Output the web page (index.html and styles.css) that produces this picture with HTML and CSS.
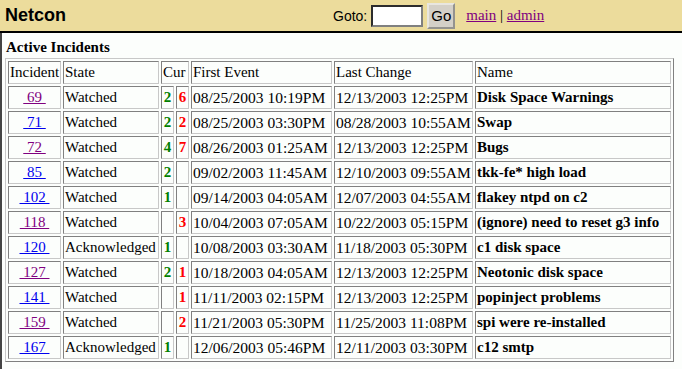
FILE: index.html
```html
<!DOCTYPE html>
<html lang="en">
<head>
  <meta charset="UTF-8">
  <title>Netcon</title>
  <link rel="stylesheet" href="styles.css">
</head>
<body>
  <header class="topbar">
    <div class="brand">Netcon</div>
    <form class="goto">
      <label for="goto">Goto:</label>
      <input type="text" id="goto">
      <button type="submit">Go</button>
      <span class="nav"><a href="#" class="visited">main</a> | <a href="#" class="visited">admin</a></span>
    </form>
  </header>

  <main class="content">
    <h2>Active Incidents</h2>
    <table class="incidents">
      <colgroup>
        <col class="w-id">
        <col class="w-state">
        <col class="w-cur">
        <col class="w-cur">
        <col class="w-first">
        <col class="w-last">
        <col class="w-name">
      </colgroup>
      <tr class="head">
        <td>Incident</td>
        <td>State</td>
        <td colspan="2">Cur</td>
        <td>First Event</td>
        <td>Last Change</td>
        <td>Name</td>
      </tr>
      <tr>
        <td class="id"><a href="#" class="visited">&nbsp;69&nbsp;</a></td>
        <td>Watched</td>
        <td class="cur ok">2</td><td class="cur bad">6</td>
        <td class="date">08/25/2003 10:19PM</td>
        <td class="date">12/13/2003 12:25PM</td>
        <td class="name">Disk Space Warnings</td>
      </tr>
      <tr>
        <td class="id"><a href="#">&nbsp;71&nbsp;</a></td>
        <td>Watched</td>
        <td class="cur ok">2</td><td class="cur bad">2</td>
        <td class="date">08/25/2003 03:30PM</td>
        <td class="date">08/28/2003 10:55AM</td>
        <td class="name">Swap</td>
      </tr>
      <tr>
        <td class="id"><a href="#" class="visited">&nbsp;72&nbsp;</a></td>
        <td>Watched</td>
        <td class="cur ok">4</td><td class="cur bad">7</td>
        <td class="date">08/26/2003 01:25AM</td>
        <td class="date">12/13/2003 12:25PM</td>
        <td class="name">Bugs</td>
      </tr>
      <tr>
        <td class="id"><a href="#">&nbsp;85&nbsp;</a></td>
        <td>Watched</td>
        <td class="cur ok">2</td><td class="cur bad"></td>
        <td class="date">09/02/2003 11:45AM</td>
        <td class="date">12/10/2003 09:55AM</td>
        <td class="name">tkk-fe* high load</td>
      </tr>
      <tr>
        <td class="id"><a href="#">&nbsp;102&nbsp;</a></td>
        <td>Watched</td>
        <td class="cur ok">1</td><td class="cur bad"></td>
        <td class="date">09/14/2003 04:05AM</td>
        <td class="date">12/07/2003 04:55AM</td>
        <td class="name">flakey ntpd on c2</td>
      </tr>
      <tr>
        <td class="id"><a href="#" class="visited">&nbsp;118&nbsp;</a></td>
        <td>Watched</td>
        <td class="cur ok"></td><td class="cur bad">3</td>
        <td class="date">10/04/2003 07:05AM</td>
        <td class="date">10/22/2003 05:15PM</td>
        <td class="name">(ignore) need to reset g3 info</td>
      </tr>
      <tr>
        <td class="id"><a href="#">&nbsp;120&nbsp;</a></td>
        <td>Acknowledged</td>
        <td class="cur ok">1</td><td class="cur bad"></td>
        <td class="date">10/08/2003 03:30AM</td>
        <td class="date">11/18/2003 05:30PM</td>
        <td class="name">c1 disk space</td>
      </tr>
      <tr>
        <td class="id"><a href="#" class="visited">&nbsp;127&nbsp;</a></td>
        <td>Watched</td>
        <td class="cur ok">2</td><td class="cur bad">1</td>
        <td class="date">10/18/2003 04:05AM</td>
        <td class="date">12/13/2003 12:25PM</td>
        <td class="name">Neotonic disk space</td>
      </tr>
      <tr>
        <td class="id"><a href="#">&nbsp;141&nbsp;</a></td>
        <td>Watched</td>
        <td class="cur ok"></td><td class="cur bad">1</td>
        <td class="date">11/11/2003 02:15PM</td>
        <td class="date">12/13/2003 12:25PM</td>
        <td class="name">popinject problems</td>
      </tr>
      <tr>
        <td class="id"><a href="#" class="visited">&nbsp;159&nbsp;</a></td>
        <td>Watched</td>
        <td class="cur ok"></td><td class="cur bad">2</td>
        <td class="date">11/21/2003 05:30PM</td>
        <td class="date">11/25/2003 11:08PM</td>
        <td class="name">spi were re-installed</td>
      </tr>
      <tr>
        <td class="id"><a href="#">&nbsp;167&nbsp;</a></td>
        <td>Acknowledged</td>
        <td class="cur ok">1</td><td class="cur bad"></td>
        <td class="date">12/06/2003 05:46PM</td>
        <td class="date">12/11/2003 03:30PM</td>
        <td class="name">c12 smtp</td>
      </tr>
    </table>
  </main>
</body>
</html>
```

FILE: styles.css
```css
body {
  margin: 0;
  background-color: #fcfefc;
  color: #000000;
  font-family: "Liberation Serif", "Times New Roman", serif;
  font-size: 15px;
}
a {
  color: #0000ee;
}
a.visited {
  color: #800080;
}
.topbar {
  display: grid;
  grid-template-columns: 333px auto;
  align-items: center;
  height: 31px;
  background-color: #ecdc9c;
  border-bottom: 2px solid #000000;
}
.brand {
  padding-left: 5px;
  font-family: "Liberation Sans", Arial, sans-serif;
  font-weight: bold;
  font-size: 18px;
}
.goto {
  display: flex;
  align-items: center;
  margin: 0;
}
.goto label {
  font-family: "Liberation Sans", Arial, sans-serif;
  font-size: 14px;
}
.goto input {
  width: 52px;
  height: 22px;
  box-sizing: border-box;
  margin: 0 0 0 4px;
  padding: 1px;
  border: 2px inset #808080;
  background-color: #ffffff;
}
.goto button {
  width: 28px;
  height: 26px;
  box-sizing: border-box;
  margin: 0 0 0 4px;
  padding: 0;
  background-color: #d4d0c8;
  border: 2px outset #e8e6e0;
  font-family: "Liberation Sans", Arial, sans-serif;
  font-size: 15px;
  color: #000000;
}
.nav {
  margin-left: 11px;
}
.content {
  min-height: calc(100vh - 33px);
  box-sizing: border-box;
  border-left: 2px solid #444444;
  padding: 5px 0 0 3px;
}
h2 {
  margin: 0 0 2px 1px;
  font-size: 15px;
  line-height: 18px;
  font-weight: bold;
}
.incidents {
  width: 669px;
  table-layout: fixed;
  border: 1px solid;
  border-color: #c8c8c8 #808080 #808080 #c8c8c8;
  border-spacing: 2px;
}
.w-id { width: 53px; }
.w-state { width: 96px; }
.w-cur { width: 13px; }
.w-first { width: 141px; }
.w-last { width: 139px; }
.w-name { width: 196px; }
.incidents td {
  padding: 1px;
  border: 1px solid;
  border-color: #808080 #c8c8c8 #c8c8c8 #808080;
  line-height: 19px;
  white-space: nowrap;
  overflow: hidden;
  text-align: left;
}
.incidents td.id {
  text-align: center;
}
.incidents td.cur {
  text-align: center;
  font-weight: bold;
}
.ok {
  color: #008000;
}
.bad {
  color: #ff0000;
}
.date {
  font-size: 15.5px;
}
.name {
  font-weight: bold;
}
```
